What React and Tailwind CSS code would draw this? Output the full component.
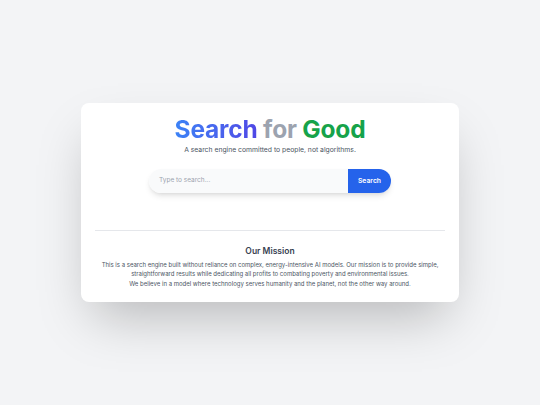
export default function App() {
  return (
    <div
      className="min-h-screen w-full bg-[#f3f4f6] flex items-center justify-center"
      style={{ fontFamily: "Inter, 'Noto Sans', sans-serif" }}
    >
      <div className="w-[378px] bg-white rounded-lg shadow-2xl px-[14px] pt-[11px] pb-[14px]">
        <h1 className="text-center text-[24.5px] font-bold leading-[30px] tracking-[-0.2px]">
          <span className="bg-gradient-to-r from-[#3b82f6] to-[#4f46e5] bg-clip-text text-transparent">Search</span>{" "}
          <span className="text-[#9ca3af]">for</span>{" "}
          <span className="text-[#16a34a]">Good</span>
        </h1>
        <p className="text-center text-[6.8px] leading-[12px] text-[#4b5563]">
          A search engine committed to people, not algorithms.
        </p>
        <div className="mx-auto mt-[13px] w-[242px] h-[24px] flex rounded-full shadow-md overflow-hidden">
          <div className="flex-1 bg-[#f9fafb] flex items-center pl-[10px]">
            <span className="text-[6.5px] text-[#9ca3af]">Type to search...</span>
          </div>
          <div className="w-[43px] bg-[#2563eb] flex items-center justify-center">
            <span className="text-[6.8px] font-semibold text-white">Search</span>
          </div>
        </div>
        <div className="mt-[37px] border-t border-[#e5e7eb]" />
        <div className="pt-[14px] text-center">
          <h2 className="text-[8.5px] font-semibold text-[#374151] leading-[12px]">Our Mission</h2>
          <p className="mt-[2.5px] text-[6px] leading-[9px] text-[#4b5563] px-[2px]">
            This is a search engine built without reliance on complex, energy-intensive AI models. Our mission is to provide simple, straightforward results while dedicating all profits to combating poverty and environmental issues.
          </p>
          <p className="mt-[1.5px] text-[6px] leading-[9px] text-[#4b5563]">
            We believe in a model where technology serves humanity and the planet, not the other way around.
          </p>
        </div>
      </div>
    </div>
  );
}
